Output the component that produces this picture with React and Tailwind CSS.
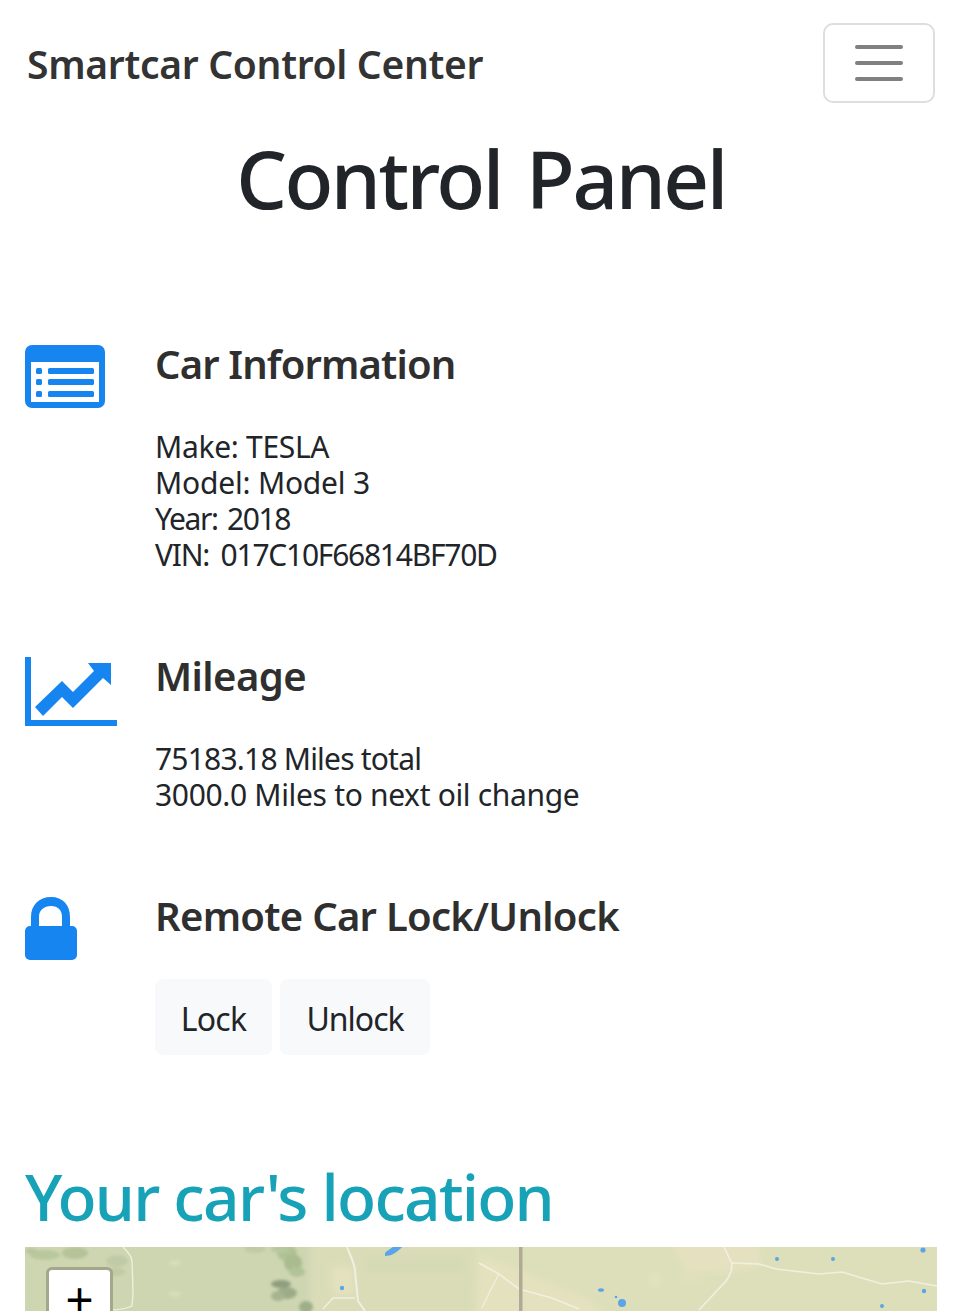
const font = { fontFamily: '"Noto Sans", sans-serif' };

function ListIcon() {
  return (
    <svg width="80" height="63" viewBox="0 0 80 63" className="block">
      <rect width="80" height="63" rx="7" fill="#1785f0" />
      <rect x="6" y="17" width="68" height="40" fill="#fff" />
      {[23, 34, 46].map((y) => (
        <g key={y} fill="#1785f0">
          <rect x="11" y={y} width="6" height="6" rx="1.5" />
          <rect x="23" y={y} width="46" height="6" rx="1.5" />
        </g>
      ))}
    </svg>
  );
}

function ChartIcon() {
  return (
    <svg width="92" height="69" viewBox="0 0 92 69" className="block">
      <path d="M0 0H6V63H92V69H0Z" fill="#1785f0" />
      <path d="M10 50L37 24L48 35L69 14L63 6L86 6V28L78 21L48 51L37 40L18 59Z" fill="#1785f0" />
    </svg>
  );
}

function LockIcon() {
  return (
    <svg width="52" height="63" viewBox="0 0 52 63" className="block">
      <path d="M6 29V20C6 8 14 0 26 0C38 0 45 8 45 20V29H37V20C37 13 33 9 26 9C19 9 14 13 14 20V29Z" fill="#1785f0" />
      <rect y="29" width="52" height="34" rx="5" fill="#1785f0" />
    </svg>
  );
}

function MapArt() {
  const hills = [
    [262, 6, 10, 8, "#b0c294"], [268, 16, 9, 9, "#a9bc8f"], [272, 25, 8, 5, "#b2c398"],
    [255, 2, 9, 4, "#b8c89e"], [256, 37, 10, 4, "#8f9d7d"], [262, 46, 10, 6, "#9dab88"],
    [253, 49, 7, 5, "#a6b490"], [281, 60, 7, 6, "#9fae8a"], [20, 8, 15, 5, "#b9c79c"],
    [50, 6, 13, 6, "#b5c398"], [6, 4, 6, 3, "#b8c59c"], [90, 25, 11, 4, "#bfcba3"],
    [230, 2, 11, 4, "#bfcaa4"], [92, 14, 11, 6, "#bfcba4"],
  ];
  return (
    <svg className="absolute inset-0 w-full h-full" viewBox="0 0 912 64" preserveAspectRatio="none">
      <defs>
        <filter id="b3" x="-30%" y="-30%" width="160%" height="160%"><feGaussianBlur stdDeviation="3" /></filter>
        <filter id="b2" x="-50%" y="-50%" width="200%" height="200%"><feGaussianBlur stdDeviation="1.5" /></filter>
        <filter id="b1" x="-10%" y="-10%" width="120%" height="120%"><feGaussianBlur stdDeviation="0.7" /></filter>
      </defs>
      <rect width="912" height="64" fill="#dcdfba" />
      <g filter="url(#b3)">
        <rect x="-10" y="-10" width="295" height="90" fill="#ced6b1" />
        <path d="M285 -10H450V80H285Z" fill="#dadcb8" />
        <path d="M306 20H328L330 48H308Z" fill="#e4e1bf" />
        <path d="M340 10H440V25H340Z" fill="#d5dab5" />
        <path d="M454 8L500 25L560 50L590 75H450Z" fill="#e4e1be" />
        <path d="M645 -10H735V20L700 26L660 24Z" fill="#e5e1c0" />
        <ellipse cx="630" cy="33" rx="5" ry="8" fill="#e5e1c0" />
        <ellipse cx="665" cy="32" rx="14" ry="3" fill="#e3e0be" />
      </g>
      <g filter="url(#b2)">
        {hills.map(([cx, cy, rx, ry, fill], i) => (
          <ellipse key={i} cx={cx} cy={cy} rx={rx} ry={ry} fill={fill} />
        ))}
        <rect x="145" y="14" width="10" height="4" fill="#d8deba" />
        <rect x="145" y="45" width="10" height="4" fill="#d8deba" />
      </g>
      <g filter="url(#b1)" fill="none" stroke="#f0f0e0">
        <path d="M322 0C326 10 330 18 330 24L333 54L340 64" strokeWidth="2" />
        <path d="M298 62L308 51H330" strokeWidth="1.4" />
        <path d="M98 0C104 6 107 10 107 14L108 44C108 52 107 56 107 59C100 62 92 63 85 63" strokeWidth="1.3" />
        <path d="M454 16L474 27L494 42L527 51L554 62" strokeWidth="1.6" />
        <path d="M474 27C468 38 462 50 457 61" strokeWidth="1.3" />
        <path d="M699 0L707 17C707 24 704 30 701 34L674 63" strokeWidth="1.6" />
        <path d="M707 16L734 17L751 22L794 27L817 25L857 37L884 34L912 39" strokeWidth="1.6" />
      </g>
      <g filter="url(#b1)" fill="#5aa5e8">
        <path d="M360 9C366 9 372 6 379 -2L370 -2C368 1 362 3 360 6Z" />
        <circle cx="317" cy="41" r="2.2" />
        <ellipse cx="576" cy="43" rx="3" ry="1.8" />
        <circle cx="597" cy="56" r="4" />
        <circle cx="591" cy="50" r="1.3" />
        <circle cx="752" cy="12" r="2" />
        <circle cx="808" cy="12" r="2" />
        <circle cx="898" cy="3" r="2.6" />
        <circle cx="899" cy="44" r="2.2" />
        <circle cx="857" cy="59" r="2" />
      </g>
      <rect x="494" y="0" width="3.5" height="64" fill="#aeaa95" />
    </svg>
  );
}

export default function App() {
  const heading = (t, tracking) => (
    <h3 className={`text-[40px] leading-[48px] font-semibold text-[#2f2f2f] -mt-[5px] ${tracking}`}>{t}</h3>
  );
  const body = "text-[30px] leading-[36px] text-[#212529] mt-[41px]";
  return (
    <div style={font} className="h-[1311px] overflow-hidden bg-white text-[#212529]">
      <nav className="h-[103px] flex items-start justify-between pl-[27px] pr-[24px] pt-[24px]">
        <span className="text-[39px] leading-[80px] font-semibold text-[#333333] tracking-[-0.3px]">Smartcar Control Center</span>
        <button className="-mt-[1px] w-[112px] h-[80px] border-[2.5px] border-[#dedede] rounded-[10px] flex flex-col items-center justify-center gap-[12px]">
          <span className="block w-[48px] h-[4px] rounded bg-[#808080]" />
          <span className="block w-[48px] h-[4px] rounded bg-[#808080]" />
          <span className="block w-[48px] h-[4px] rounded bg-[#808080]" />
        </button>
      </nav>
      <div className="px-[25px] w-[962px]">
        <h1 className="text-center text-[80px] leading-[96px] font-medium text-[#212529] mt-[27px] tracking-[-2.5px] [word-spacing:6px]">Control Panel</h1>
        <div className="flex mt-[119px]">
          <div className="w-[130px] shrink-0"><ListIcon /></div>
          <div>
            {heading("Car Information", "tracking-[-0.87px]")}
            <p className={body}>
              <span className="tracking-[-0.3px]">Make: TESLA</span><br />
              <span className="tracking-[-0.2px]">Model: Model 3</span><br />
              <span className="tracking-[-1.4px] [word-spacing:3px]">Year: 2018</span><br />
              <span className="tracking-[-1.25px] [word-spacing:5px]">VIN: 017C10F66814BF70D</span>
            </p>
          </div>
        </div>
        <div className="flex mt-[84px]">
          <div className="w-[130px] shrink-0"><ChartIcon /></div>
          <div>
            {heading("Mileage", "tracking-[-0.57px]")}
            <p className={body}>
              <span className="tracking-[-0.8px]">75183.18 Miles total</span><br />
              <span className="tracking-[-0.33px]">3000.0 Miles to next oil change</span>
            </p>
          </div>
        </div>
        <div className="flex mt-[84px]">
          <div className="w-[130px] shrink-0"><LockIcon /></div>
          <div>
            {heading("Remote Car Lock/Unlock", "tracking-[-0.73px]")}
            <div className="flex gap-[8px] mt-[39px]">
              <button className="w-[117px] h-[76px] pt-[3px] rounded-[8px] bg-[#f8f9fa] text-[32px] text-[#212529] tracking-[-0.8px]">Lock</button>
              <button className="w-[150px] h-[76px] pt-[3px] rounded-[8px] bg-[#f8f9fa] text-[32px] text-[#212529] tracking-[-1px]">Unlock</button>
            </div>
          </div>
        </div>
        <h2 className="text-[64px] leading-[76px] text-[#17a2b8] mt-[104px] font-medium tracking-[-1.75px]">Your car's location</h2>
        <div className="relative h-[64px] w-[912px] mt-[12px] overflow-hidden bg-[#cfd6b0]">
          <MapArt />
          <div className="absolute left-[21px] top-[20px] w-[67px] h-[66px] bg-white rounded-[6px] border-[3.5px] border-[#a4a78c] flex items-start justify-center">
            <span style={{ fontFamily: '"Liberation Sans", sans-serif' }} className="text-[48px] leading-[48px] font-medium text-black mt-[6px]">+</span>
          </div>
        </div>
      </div>
    </div>
  );
}
